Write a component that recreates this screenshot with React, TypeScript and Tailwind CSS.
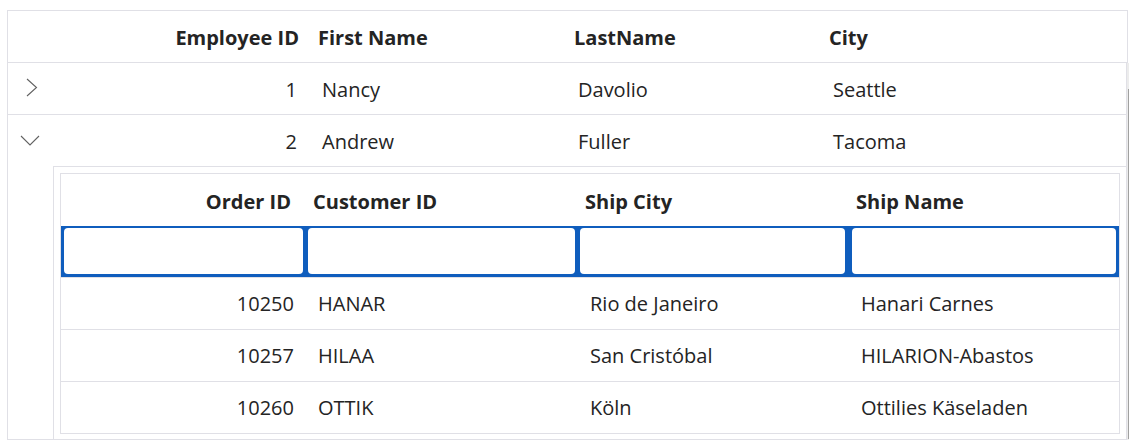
import React from "react";

const line = "border-[#e0e0e6]";

const employees = [
  { id: 1, first: "Nancy", last: "Davolio", city: "Seattle" },
  { id: 2, first: "Andrew", last: "Fuller", city: "Tacoma" },
];

const orders = [
  { id: 10250, customer: "HANAR", city: "Rio de Janeiro", ship: "Hanari Carnes" },
  { id: 10257, customer: "HILAA", city: "San Cristóbal", ship: "HILARION-Abastos" },
  { id: 10260, customer: "OTTIK", city: "Köln", ship: "Ottilies Käseladen" },
];

function ChevronRight() {
  return (
    <svg width="12" height="19" viewBox="0 0 12 19" fill="none" className="mt-[-2px]">
      <path d="M1 1l9.5 8.5L1 18" stroke="#616161" strokeWidth="1.1" />
    </svg>
  );
}

function ChevronDown() {
  return (
    <svg width="20" height="11" viewBox="0 0 20 11" fill="none">
      <path d="M1 1l9 9 9-9" stroke="#616161" strokeWidth="1.1" />
    </svg>
  );
}

function EmployeeCells({ e }: { e: (typeof employees)[number] }) {
  return (
    <>
      <div className="w-[257px] pr-[13px] text-right">{e.id}</div>
      <div className="w-[256px] pl-[12px]">{e.first}</div>
      <div className="w-[255px] pl-[12px]">{e.last}</div>
      <div className="flex-1 pl-[12px]">{e.city}</div>
    </>
  );
}

function OrdersGrid() {
  return (
    <div className={`border ${line}`}>
      <div className="flex h-[52px] items-center pt-[3px] font-bold">
        <div className="w-[244px] pr-[14px] text-right">Order ID</div>
        <div className="w-[272px] pl-[8px]">Customer ID</div>
        <div className="w-[271px] pl-[8px]">Ship City</div>
        <div className="flex-1 pl-[8px]">Ship Name</div>
      </div>
      <div className={`flex h-[52px] gap-[5px] border-b bg-[#0f5dbd] px-[3px] pt-[2px] pb-[3px] ${line}`}>
        <div className="w-[239px] rounded-[4px] bg-white" />
        <div className="w-[267px] rounded-[4px] bg-white" />
        <div className="w-[265px] rounded-[4px] bg-white" />
        <div className="ml-[2px] flex-1 rounded-[4px] bg-white" />
      </div>
      {orders.map((o, i) => (
        <div
          key={o.id}
          className={`flex items-center pt-[1px] ${i < orders.length - 1 ? `h-[52px] border-b ${line}` : "h-[51px]"}`}
        >
          <div className="w-[244px] pr-[11px] text-right">{o.id}</div>
          <div className="w-[272px] pl-[13px]">{o.customer}</div>
          <div className="w-[271px] pl-[13px]">{o.city}</div>
          <div className="flex-1 pl-[13px]">{o.ship}</div>
        </div>
      ))}
    </div>
  );
}

export default function App() {
  return (
    <div className="h-[443px] w-[1130px] bg-white pt-[10px] pl-[7px] font-['Open_Sans',sans-serif] text-[20px] text-[#242424]">
      <div className={`flex h-[53px] w-[1121px] items-center border border-b pt-[3px] ${line} font-bold`}>
        <div className="w-[45px]" />
        <div className="w-[257px] pr-[11px] text-right">Employee ID</div>
        <div className="w-[256px] pl-[8px]">First Name</div>
        <div className="w-[255px] pl-[8px]">LastName</div>
        <div className="flex-1 pl-[8px]">City</div>
      </div>
      <div className="flex">
        <div className={`w-[1120px] border-x border-b ${line}`}>
          <div className={`flex h-[52px] items-center border-b ${line}`}>
            <div className="flex w-[45px] justify-center pl-[2px]">
              <ChevronRight />
            </div>
            <div className="flex flex-1 items-center pt-[3px]">
              <EmployeeCells e={employees[0]} />
            </div>
          </div>
          <div className="flex">
            <div className="flex w-[45px] justify-center pt-[20px] pr-[1px]">
              <ChevronDown />
            </div>
            <div className="flex-1">
              <div className={`flex h-[52px] items-center border-b pt-[3px] ${line}`}>
                <EmployeeCells e={employees[1]} />
              </div>
              <div className={`border-l ${line} pt-[6px] pr-[6px] pb-[5px] pl-[6px]`}>
                <OrdersGrid />
              </div>
            </div>
          </div>
        </div>
        <div className="flex w-[2px] flex-col bg-[#ececec]">
          <div className="mt-[26px] ml-[1px] h-[350px] w-[1px] bg-[#a0a0a0]" />
        </div>
      </div>
    </div>
  );
}
